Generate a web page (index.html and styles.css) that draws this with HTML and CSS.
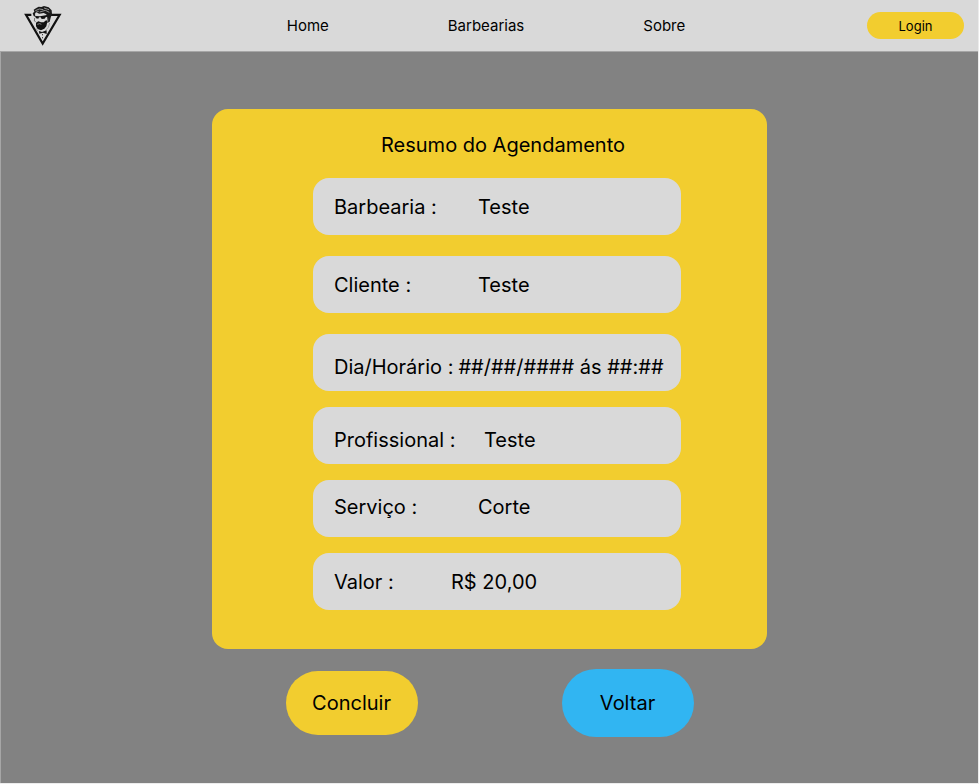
FILE: index.html
```html
<!DOCTYPE html>
<html lang="pt-BR">
<head>
  <meta charset="utf-8">
  <meta name="viewport" content="width=device-width, initial-scale=1">
  <title>Resumo do Agendamento</title>
  <link rel="stylesheet" href="styles.css">
</head>
<body>
  <header class="topbar">
    <a class="logo" href="#" aria-label="Início">
      <svg viewBox="72 15 114 123" width="38" height="41" aria-hidden="true">
        <path d="M94 44.500H78L128 131L179 44.500H153" fill="none" stroke="#111" stroke-width="6.500"/>
        <path d="M101 48L98 40L103 35L101 29L109 24L116 20L124 21L132 18L146 22L155 31L156 42L152 53L149 65L143 68L142 54L139 43L131 39L118 41L108 37L105 41L106 50Z" fill="#1a1a1a"/>
        <path d="M106 32L118 27L130 29M119 36L136 31L148 37M132 24L147 29M108 37L116 34" fill="none" stroke="#aaa" stroke-width="2.500"/>
        <path d="M105 48L120 49L141 45V50L137 52L134 56L125 57L122 52L117 52L115 56L108 55Z" fill="#111"/>
        <path d="M104 54L103 63L107 65M142 52L147 60L141 69" fill="none" stroke="#444" stroke-width="2"/>
        <path d="M108 68L115 64L123 67L131 67L139 60L142 65L139 79L133 86L123 91L113 87L108 79Z" fill="#111"/>
        <path d="M112 73L119 71L124 73" fill="none" stroke="#bbb" stroke-width="2"/>
        <path d="M149 69L145 82L136 92M107 84L114 94" fill="none" stroke="#888" stroke-width="2"/>
        <path d="M117 93L126 96L140 91V102L129 98L118 101ZM126 103H129V106H126ZM126 112H129V115H126Z" fill="#111"/>
      </svg>
    </a>
    <nav class="menu">
      <a href="#">Home</a>
      <a href="#">Barbearias</a>
      <a href="#">Sobre</a>
    </nav>
    <button class="login" type="button">Login</button>
  </header>
  <main class="page">
    <section class="card">
      <h1 class="title">Resumo do Agendamento</h1>
      <dl class="summary">
        <div class="row"><dt>Barbearia :</dt><dd>Teste</dd></div>
        <div class="row row-spaced"><dt>Cliente :</dt><dd>Teste</dd></div>
        <div class="row row-spaced row-low row-inline"><dt>Dia/Horário :</dt><dd>##/##/#### ás ##:##</dd></div>
        <div class="row row-low row-long"><dt>Profissional :</dt><dd>Teste</dd></div>
        <div class="row row-high"><dt>Serviço :</dt><dd>Corte</dd></div>
        <div class="row row-short"><dt>Valor :</dt><dd>R$ 20,00</dd></div>
      </dl>
    </section>
    <div class="actions">
      <button class="action action-done" type="button">Concluir</button>
      <button class="action action-back" type="button">Voltar</button>
    </div>
  </main>
</body>
</html>
```
FILE: styles.css
```css
* {
  box-sizing: border-box;
}

body {
  margin: 0;
  min-height: 100vh;
  display: flex;
  flex-direction: column;
  border: solid #ececec;
  border-width: 0 1px 1px 0;
  font-family: Inter, "Liberation Sans", sans-serif;
  color: #000;
}

button {
  border: 0;
  padding: 0;
  font-family: inherit;
  color: inherit;
  cursor: pointer;
}

.topbar {
  display: grid;
  grid-template-columns: 1fr auto 1fr;
  align-items: center;
  height: 52px;
  padding: 0 14px 0 8px;
  background: #d9d9d9;
  border-bottom: 1px solid #a6a6a6;
}

.logo {
  justify-self: start;
  margin-left: 16px;
}

.logo svg {
  display: block;
}

.menu {
  display: flex;
  gap: 119px;
  font-size: 15px;
}

.menu a {
  color: inherit;
  text-decoration: none;
}

.login {
  justify-self: end;
  width: 97px;
  height: 27px;
  border-radius: 14px;
  background: #f2cd2f;
  font-size: 13px;
}

.page {
  flex: 1;
  display: flex;
  flex-direction: column;
  align-items: center;
  padding: 57px 16px 24px;
  background: #828282;
  border-left: 1px solid #a6a6a6;
}

.card {
  width: 100%;
  max-width: 555px;
  padding: 23px 86px 39px 101px;
  border-radius: 16px;
  background: #f2cd2f;
}

.title {
  margin: 0 0 20px;
  padding-left: 12px;
  font-size: 20px;
  line-height: 26px;
  font-weight: 400;
  text-align: center;
}

.summary {
  display: flex;
  flex-direction: column;
  gap: 16px;
  margin: 0;
}

.row {
  display: flex;
  align-items: center;
  min-height: 57px;
  padding: 0 12px 0 21px;
  border-radius: 16px;
  background: #d9d9d9;
  font-size: 20px;
  line-height: 26px;
}

.row dt {
  flex: none;
  width: 144px;
}

.row dd {
  margin: 0;
}

.row-spaced {
  margin-top: 5px;
}

.row-low {
  padding-top: 8px;
}

.row-high {
  padding-bottom: 4px;
}

.row-inline dt {
  width: auto;
  margin-right: 5px;
}

.row-long dt {
  width: 150px;
}

.row-short dt {
  width: 117px;
}

.actions {
  display: flex;
  justify-content: center;
  align-items: center;
  gap: 144px;
  margin-top: 20px;
}

.action {
  width: 132px;
  border-radius: 34px;
  font-size: 20px;
}

.action-done {
  height: 64px;
  background: #f2cd2f;
}

.action-back {
  height: 68px;
  background: #31b5f2;
}
```
